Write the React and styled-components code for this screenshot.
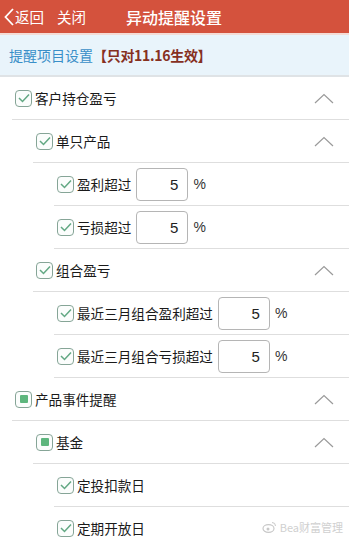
import styled, { createGlobalStyle } from 'styled-components';

const GlobalStyle = createGlobalStyle`
  html, body {
    margin: 0;
    padding: 0;
    background: #ffffff;
  }
  body {
    font-family: "Noto Sans CJK SC", "Liberation Sans", sans-serif;
    overflow: hidden;
  }
`;

const rows = [
  { level: 0, label: '客户持仓盈亏', state: 'checked', toggle: true },
  { level: 1, label: '单只产品', state: 'checked', toggle: true },
  { level: 2, label: '盈利超过', state: 'checked', value: '5' },
  { level: 2, label: '亏损超过', state: 'checked', value: '5' },
  { level: 1, label: '组合盈亏', state: 'checked', toggle: true },
  { level: 2, label: '最近三月组合盈利超过', state: 'checked', value: '5' },
  { level: 2, label: '最近三月组合亏损超过', state: 'checked', value: '5' },
  { level: 0, label: '产品事件提醒', state: 'partial', toggle: true },
  { level: 1, label: '基金', state: 'partial', toggle: true },
  { level: 2, label: '定投扣款日', state: 'checked' },
  { level: 2, label: '定期开放日', state: 'checked' },
];

function Check ({ state }) {
  return (
    <Box>
      {state === 'checked' ? (
        <svg width="12" height="10" viewBox="0 0 12 10">
          <polyline points="1,5 4.5,8.5 11,1.5" fill="none" stroke="#62a883" strokeWidth="1.5" />
        </svg>
      ) : (
        <Dot />
      )}
    </Box>
  );
}

function Chevron () {
  return (
    <svg width="20" height="11" viewBox="0 0 20 11">
      <polyline points="1,10 10,1.5 19,10" fill="none" stroke="#9a9a9a" strokeWidth="1.2" />
    </svg>
  );
}

function App () {
  return (
    <>
      <GlobalStyle />
      <Page>
        <Header>
          <Back>
            <svg width="10" height="18" viewBox="0 0 10 18">
              <polyline points="9,1 1.5,9 9,17" fill="none" stroke="#fff" strokeWidth="1.8" />
            </svg>
            <span>返回</span>
          </Back>
          <HeadLink>关闭</HeadLink>
          <Title>异动提醒设置</Title>
        </Header>
        <Band>
          <BandTitle>提醒项目设置</BandTitle>
          <BandNote>【只对11.16生效】</BandNote>
        </Band>
        <List>
          {rows.map((r, i) => (
            <Row key={i} level={r.level}>
              <Check state={r.state} />
              <Label>{r.label}</Label>
              {r.value && (
                <>
                  <Field>{r.value}</Field>
                  <Unit>%</Unit>
                </>
              )}
              {r.toggle && (
                <Toggle>
                  <Chevron />
                </Toggle>
              )}
            </Row>
          ))}
        </List>
        <Watermark>
          <svg width="15" height="12" viewBox="0 0 15 12">
            <ellipse cx="6.5" cy="7.5" rx="5.5" ry="3.8" fill="none" stroke="#c8c8c8" strokeWidth="1.2" />
            <circle cx="6" cy="8" r="1.5" fill="#c8c8c8" />
            <path d="M10,1.5 a3.5,3.5 0 0 1 3.5,3.5" fill="none" stroke="#c8c8c8" strokeWidth="1" />
          </svg>
          <span>Bea财富管理</span>
        </Watermark>
      </Page>
    </>
  );
}

const Page = styled.div`
  position: relative;
  width: 349px;
  height: 541px;
  overflow: hidden;
  background: #ffffff;
`;

const Header = styled.div`
  display: flex;
  align-items: center;
  height: 33px;
  padding-left: 4px;
  background: #d4523d;
  color: #ffffff;
  border-bottom: 2px solid #f4dcd6;
`;

const Back = styled.div`
  display: flex;
  align-items: center;
  gap: 1px;
  font-size: 14.5px;
`;

const HeadLink = styled.div`
  margin-left: 13px;
  font-size: 14.5px;
`;

const Title = styled.div`
  margin-left: 40px;
  font-size: 16px;
  font-weight: 500;
`;

const Band = styled.div`
  display: flex;
  align-items: center;
  height: 40px;
  padding-left: 9px;
  background: #e9f4fb;
  border-bottom: 2px solid #dfe3e6;
  font-size: 14px;
`;

const BandTitle = styled.span`
  color: #3a8fc8;
`;

const BandNote = styled.span`
  color: #86301f;
  font-weight: 700;
  letter-spacing: -0.3px;
`;

const List = styled.div`
  display: flex;
  flex-direction: column;
`;

const Row = styled.div`
  display: flex;
  align-items: center;
  height: 42px;
  margin-left: ${p => [12, 33, 54][p.level]}px;
  padding-left: 3px;
  border-bottom: 1.5px solid #dedede;
`;

const Box = styled.div`
  display: flex;
  align-items: center;
  justify-content: center;
  width: 15px;
  height: 15px;
  border: 1.5px solid #86a597;
  border-radius: 4px;
  background: #fbfdfc;
  flex: none;
`;

const Dot = styled.div`
  width: 8px;
  height: 8px;
  border-radius: 1px;
  background: #5db67d;
`;

const Label = styled.span`
  margin-left: 3px;
  font-size: 13.6px;
  color: #1a1a1a;
`;

const Field = styled.div`
  display: flex;
  align-items: center;
  justify-content: flex-end;
  box-sizing: border-box;
  width: 52px;
  height: 33px;
  margin-left: 5px;
  padding-right: 9px;
  border: 1px solid #b5b5b5;
  border-radius: 4px;
  font-family: "Liberation Sans", sans-serif;
  font-size: 15px;
  color: #222222;
`;

const Unit = styled.span`
  margin-left: 5px;
  font-family: "Liberation Sans", sans-serif;
  font-size: 14px;
  color: #333333;
`;

const Toggle = styled.div`
  display: flex;
  margin-left: auto;
  margin-right: 15px;
`;

const Watermark = styled.div`
  position: absolute;
  right: 6px;
  bottom: 6px;
  display: flex;
  align-items: center;
  gap: 3px;
  font-size: 11px;
  color: #d0d0d0;
`;

export default App;
